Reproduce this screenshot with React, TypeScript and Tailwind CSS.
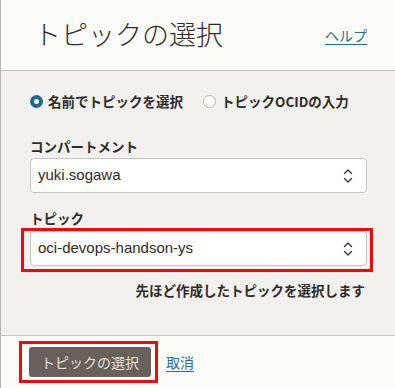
import React from 'react';

const jp = "font-['Noto_Sans_CJK_JP','Noto_Sans',sans-serif]";
const latin = "font-['Liberation_Sans','Noto_Sans_CJK_JP',sans-serif]";

function Chevron() {
  return (
    <svg width="10" height="16" viewBox="0 0 10 16" fill="none" stroke="#3a3632" strokeWidth="1.4" strokeLinecap="round" strokeLinejoin="round">
      <path d="M1.5 5.5 L5 2 L8.5 5.5" />
      <path d="M1.5 10.5 L5 14 L8.5 10.5" />
    </svg>
  );
}

function Select({ value }: { value: string }) {
  return (
    <div className="flex h-[35px] items-center justify-between rounded-[4px] border border-[#c7c4bf] bg-white pl-[7px] pr-[13px]">
      <span className={`${latin} text-[15px] text-[#2e2b28]`}>{value}</span>
      <Chevron />
    </div>
  );
}

export default function App() {
  return (
    <div className={`${jp} h-[388px] w-[395px] border-l border-[#b9b5af] bg-[#fcfcfb] text-[#2e2b28]`}>
      {/* Header */}
      <header className="flex h-[71px] items-start justify-between border-b border-[#c7c3bd] pl-[33px] pr-[28px]">
        <h1 className="mt-[14px] text-[27px] font-light leading-[40px]">トピックの選択</h1>
        <a className="mt-[25px] text-[14px] leading-[20px] text-[#1f6f94] underline underline-offset-[3px]">ヘルプ</a>
      </header>

      {/* Body */}
      <section className="h-[265px] border-b border-[#c7c3bd] bg-[#f2f1ef] pl-[29px] pr-[28px] pt-[20px]">
        <div className="flex h-[20px] items-center text-[13.5px] font-bold">
          <span className="mr-[5px] flex h-[13px] w-[13px] items-center justify-center rounded-full bg-[#1f6a8c]">
            <span className="h-[5px] w-[5px] rounded-full bg-white" />
          </span>
          <span>名前でトピックを選択</span>
          <span className="ml-[20px] mr-[5px] h-[13px] w-[13px] rounded-full border border-[#b9b5af] bg-white" />
          <span>トピックOCIDの入力</span>
        </div>

        <div className="mt-[25px] text-[13.5px] font-bold leading-[20px]">コンパートメント</div>
        <div className="mt-[2px]">
          <Select value="yuki.sogawa" />
        </div>

        <div className="mt-[15px] text-[13.5px] font-bold leading-[20px]">トピック</div>
        <div className="relative mt-[3px]">
          <Select value="oci-devops-handson-ys" />
          <div className="pointer-events-none absolute -bottom-[6px] -left-[9px] -right-[6px] -top-[3px] border-[3px] border-[#ee0a0a]" />
        </div>

        <div className="mt-[14px] pr-[2px] text-right text-[13.5px] font-bold leading-[20px]">先ほど作成したトピックを選択します</div>
      </section>

      {/* Footer */}
      <footer className="flex items-center gap-[15px] pl-[28px] pt-[11px]">
        <div className="relative">
          <button className="h-[30px] rounded-[3px] bg-[#67605b] px-[12px] text-[14px] text-[#e6e3df]">トピックの選択</button>
          <div className="pointer-events-none absolute -bottom-[6px] -left-[10px] -right-[7px] -top-[6px] border-[3px] border-[#ee0a0a]" />
        </div>
        <a className="text-[14px] text-[#1f6f94] underline underline-offset-[3px]">取消</a>
      </footer>
    </div>
  );
}
